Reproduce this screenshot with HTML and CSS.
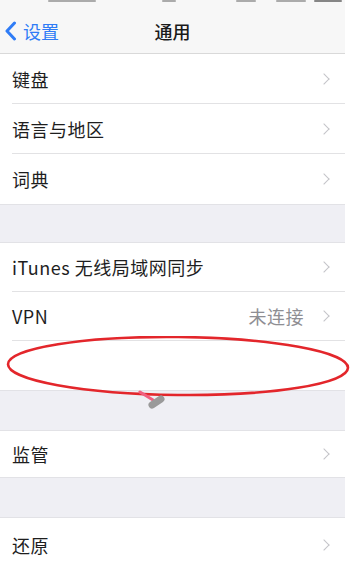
FILE: index.html
```html
<!DOCTYPE html>
<html lang="zh">
<head>
<meta charset="utf-8">
<link rel="stylesheet" href="styles.css">
</head>
<body>
<div class="screen">
  <div class="status">
    <span class="frag f1"></span>
    <span class="frag f2"></span>
    <span class="frag f3"></span>
    <span class="frag f4"></span>
    <span class="frag f5"></span>
  </div>
  <div class="nav">
    <div class="back">
      <svg class="back-icon" width="13" height="20" viewBox="0 0 13 20"><path d="M10.5 2 L3 10 L10.5 18" fill="none" stroke="#2f7cf6" stroke-width="3" stroke-linecap="round" stroke-linejoin="round"/></svg>
      <span>设置</span>
    </div>
    <div class="title">通用</div>
  </div>

  <div class="group">
    <div class="row r50"><span class="label">键盘</span><span class="chev"></span></div>
    <div class="row r50"><span class="label">语言与地区</span><span class="chev"></span></div>
    <div class="row r50 last"><span class="label">词典</span><span class="chev"></span></div>
  </div>
  <div class="gap g39"></div>
  <div class="group">
    <div class="row r49"><span class="label">iTunes 无线局域网同步</span><span class="chev"></span></div>
    <div class="row r49"><span class="label">VPN</span><span class="value">未连接</span><span class="chev"></span></div>
    <div class="row r49 last"></div>
  </div>
  <div class="gap g41"></div>
  <div class="group">
    <div class="row r46 last"><span class="label">监管</span><span class="chev"></span></div>
  </div>
  <div class="gap g41"></div>
  <div class="group">
    <div class="row r54 last"><span class="label">还原</span><span class="chev"></span></div>
  </div>

  <svg class="mark" width="352" height="92" viewBox="0 0 352 92">
    <ellipse cx="178" cy="30" rx="170" ry="29" fill="none" stroke="#e3262b" stroke-width="2.6" transform="rotate(0.6 178 30)"/>
    <path d="M140 56 L153 64" stroke="#f06080" stroke-width="3" stroke-linecap="round"/>
    <path d="M152 69 L161 63" stroke="#9a9a9a" stroke-width="7" stroke-linecap="round"/>
  </svg>
</div>
</body>
</html>
```
FILE: styles.css
```css
* { box-sizing: border-box; }
html, body { margin: 0; padding: 0; background: #ffffff; }
body {
  font-family: "Noto Sans CJK SC", "Noto Sans", "Liberation Sans", sans-serif;
  color: #1e1e1e;
  width: 350px;
  height: 563px;
  overflow: hidden;
}
.screen {
  position: relative;
  width: 345px;
  height: 563px;
  background: #ffffff;
}
.status {
  height: 8px;
  background: #f7f7f7;
  display: flex;
  align-items: flex-start;
}
.frag {
  height: 2px;
  background: #8a8a8a;
  border-radius: 1px;
  opacity: 0.7;
}
.f1 { width: 48px; margin-left: 48px; }
.f2 { width: 14px; margin-left: 66px; }
.f3 { width: 20px; margin-left: 60px; }
.f4 { width: 30px; margin-left: 20px; }
.f5 { width: 28px; margin-left: 8px; background: #555; }
.nav {
  height: 46px;
  background: #f7f7f7;
  border-bottom: 1px solid #d9d9d9;
  position: relative;
  display: flex;
  align-items: center;
  justify-content: center;
}
.back {
  position: absolute;
  left: 4px;
  top: 0;
  height: 45px;
  display: flex;
  align-items: center;
  gap: 6px;
  color: #2f7cf6;
  font-size: 18px;
}
.title {
  font-size: 18px;
  font-weight: 500;
  color: #1a1a1a;
}
.group { background: #ffffff; padding-left: 12px; }
.row {
  display: flex;
  align-items: center;
  border-bottom: 1px solid #e2e2e4;
  padding-right: 14px;
  font-size: 18px;
}
.row.last { border-bottom: none; }
.r50 { height: 50px; }
.r49 { height: 49px; }
.r46 { height: 46px; }
.r54 { height: 54px; }
.label { flex: 1; letter-spacing: 0.5px; }
.value { color: #8e8e93; margin-right: 16px; letter-spacing: 0.5px; }
.chev {
  width: 8px;
  height: 8px;
  border-top: 1.5px solid #c4c4c8;
  border-right: 1.5px solid #c4c4c8;
  transform: rotate(45deg);
  margin-right: 3px;
}
.gap {
  background: #efeff4;
  border-top: 1px solid #e2e2e6;
  border-bottom: 1px solid #e2e2e6;
}
.g39 { height: 39px; }
.g41 { height: 41px; }
.mark {
  position: absolute;
  left: 0;
  top: 336px;
}
```
